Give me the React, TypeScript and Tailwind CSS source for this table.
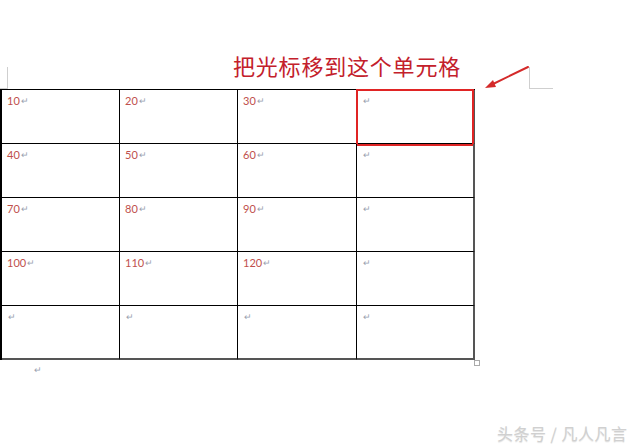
const rows = [
  ["10", "20", "30", ""],
  ["40", "50", "60", ""],
  ["70", "80", "90", ""],
  ["100", "110", "120", ""],
  ["", "", "", ""],
];

function Mark() {
  return <span className="text-[9px] text-gray-400 align-top ml-px">↵</span>;
}

export default function App() {
  return (
    <div
      className="relative w-[640px] h-[448px] bg-white overflow-hidden"
      style={{ fontFamily: "Lato, 'Noto Sans CJK SC', sans-serif" }}
    >
      {/* corner marks of the page margin */}
      <div className="absolute left-0 top-[67px] w-[8px] h-[22px] border-r border-b border-[#cfcfcf]" />
      <div className="absolute left-[529px] top-[67px] w-[24px] h-[22px] border-l border-b border-[#cfcfcf]" />

      {/* arrow */}
      <svg className="absolute left-[480px] top-[62px]" width="56" height="32" viewBox="0 0 56 32">
        <line x1="48" y1="5" x2="11" y2="23" stroke="#d42a2a" strokeWidth="2" strokeLinecap="round" />
        <polygon points="5,26 13,18 16,25" fill="#d42a2a" />
      </svg>

      <div className="h-[89px] pl-[233px] pt-[51px]">
        <div
          className="text-[22px] leading-[28px] tracking-[0.8px] text-[#c3202b]"
          style={{ fontFamily: "'Noto Sans CJK SC', sans-serif" }}
        >
          把光标移到这个单元格
        </div>
      </div>

      <div className="relative w-[476px]">
        <div className="grid grid-cols-[118px_118px_119px_118px] border-l-2 border-t border-black w-fit">
          {rows.map((row, r) =>
            row.map((v, c) => (
              <div
                key={`${r}-${c}`}
                className={`relative h-[54px] pl-[5px] pt-[4px] text-[11px] leading-[14px] text-[#c0504d] border-black ${
                  c === 3 ? "border-r-2 border-r-[#555]" : "border-r"
                } ${r === 4 ? "border-b-2 border-b-[#555]" : "border-b"}`}
              >
                {v}
                <Mark />
                {r === 0 && c === 3 && (
                  <div className="absolute -left-px -top-px w-[118px] h-[57px] border-2 border-[#e02424]" />
                )}
              </div>
            ))
          )}
        </div>
        <div className="absolute left-[474px] bottom-[-6px] w-[6px] h-[6px] border border-[#aaa] bg-white" />
      </div>

      <div className="pl-[33px] pt-[4px] leading-[12px]">
        <Mark />
      </div>

      <div
        className="absolute left-[497px] top-[423px] text-[16px] leading-[20px] tracking-[0.5px] text-[#d0d0d0]"
        style={{ fontFamily: "'Noto Sans CJK SC', sans-serif", textShadow: "0 1px 1px rgba(0,0,0,0.12)" }}
      >
        头条号 / 凡人凡言
      </div>
    </div>
  );
}
